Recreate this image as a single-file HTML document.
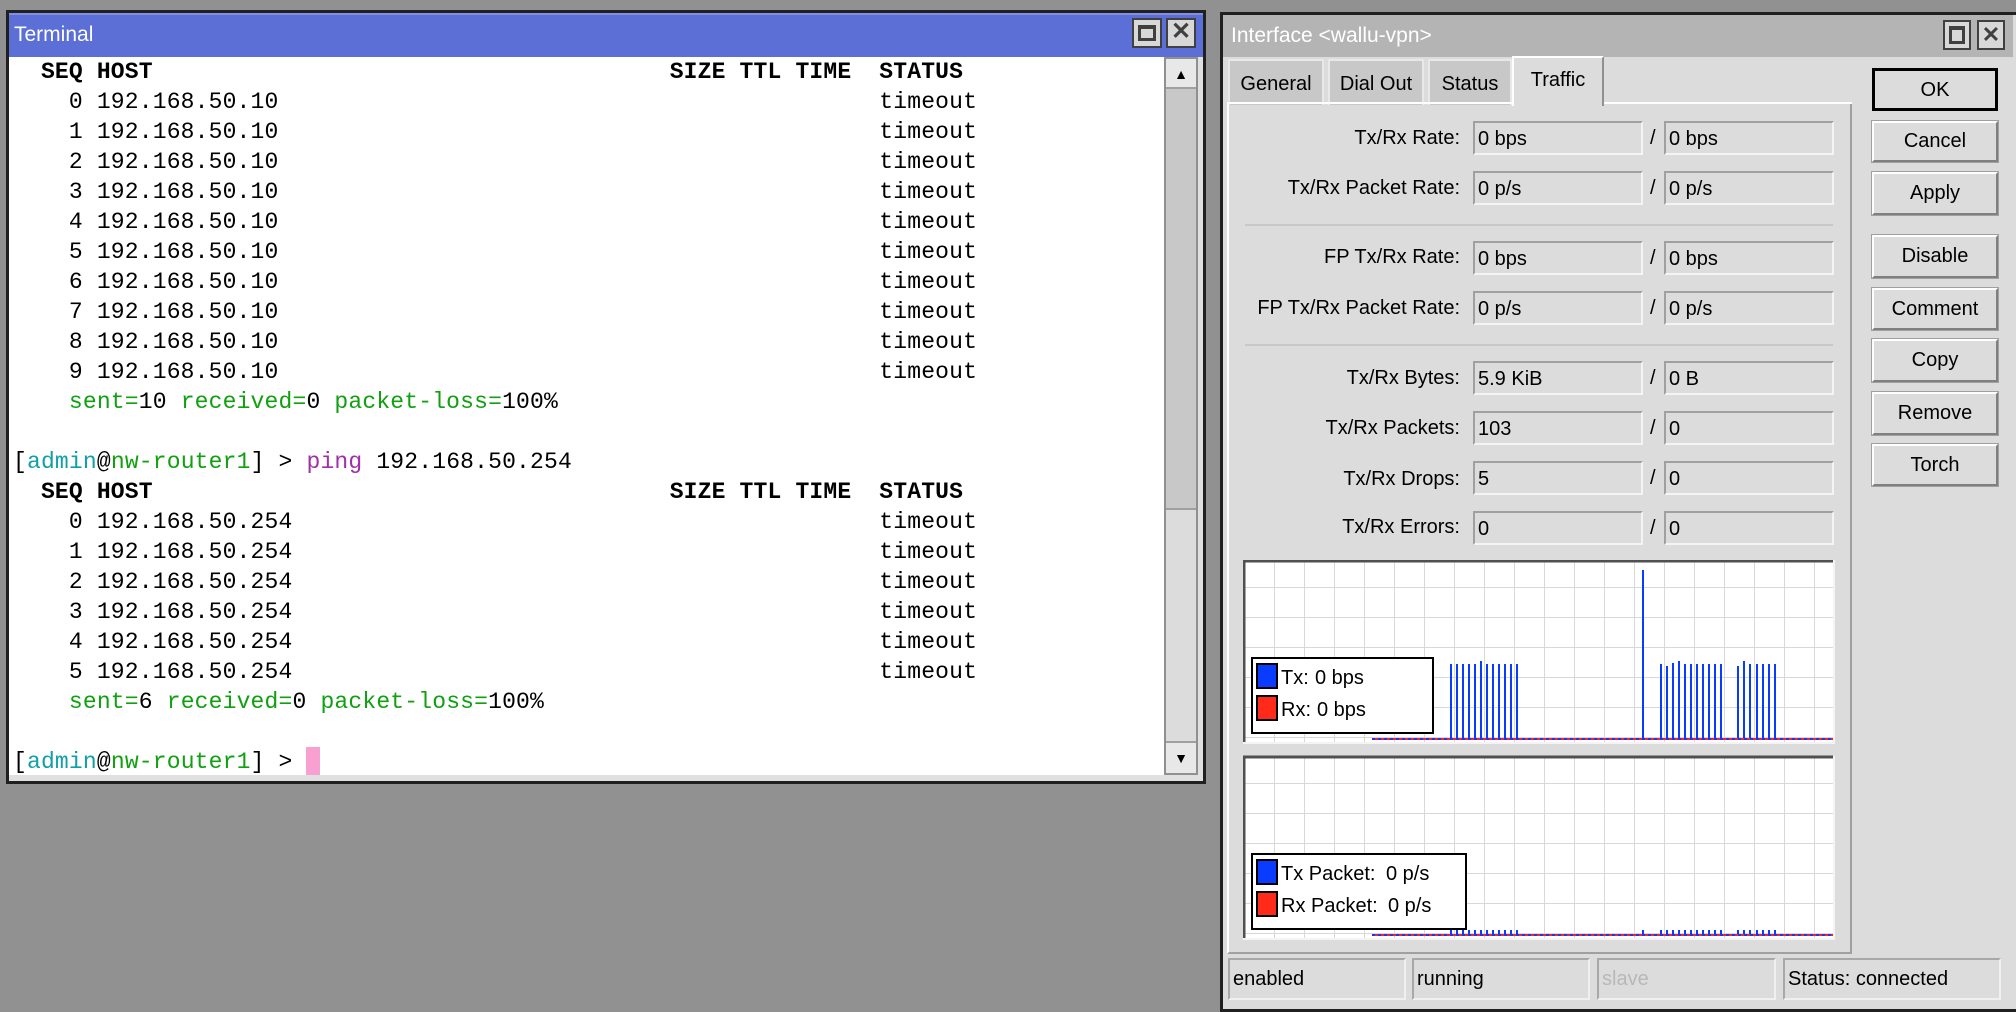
<!DOCTYPE html>
<html><head><meta charset="utf-8"><style>
body{margin:0;width:2016px;height:1006px;background:#919191;position:relative;overflow:hidden;font-family:"Liberation Sans",sans-serif}
.a{position:absolute;box-sizing:border-box}
pre{margin:0;font-family:"Liberation Mono",monospace;font-size:23px;letter-spacing:0.17px;line-height:30px;color:#000}
.b{font-weight:bold}.t{color:#10a0a8}.g{color:#10a010}.m{color:#a030a8}
.lbl{position:absolute;right:0;font-size:20px;color:#000;text-align:right}
.fld{position:absolute;height:34px;background:#dcdcdc;border:2px solid #a0a0a0;border-right-color:#f4f4f4;border-bottom-color:#f4f4f4;font-size:20px;line-height:32px;padding-left:3px;box-sizing:border-box}
.sl{position:absolute;left:1650px;font-size:20px}
.btn{position:absolute;left:1872px;width:126px;background:#dcdcdc;border:2px solid #fff;border-right-color:#808080;border-bottom-color:#808080;font-size:20px;text-align:center;box-sizing:border-box;outline:1px solid #a0a0a0}
.tab{position:absolute;top:59px;height:46px;background:#c8c8c8;border:2px solid #e8e8e8;border-bottom:none;font-size:20px;text-align:center;line-height:46px;box-sizing:border-box}
.sb{position:absolute;top:958px;height:42px;border:2px solid #a8a8a8;border-right-color:#f0f0f0;border-bottom-color:#f0f0f0;font-size:20px;line-height:38px;padding-left:3px;box-sizing:border-box}
</style></head><body>
<div class="a" style="left:6px;top:10px;width:1200px;height:774px;background:#e0e0e0;border:3px solid #202020"></div>
<div class="a" style="left:9px;top:13px;width:1194px;height:44px;background:#5b6fd6;border-top:2px solid #8090e0"></div>
<div class="a" style="left:14px;top:20px;color:#fff;font-size:21px;line-height:30px">Terminal</div>
<div class="a" style="left:1132px;top:18px;width:30px;height:30px;background:#d8d8d8;border:2px solid #404040"><div class="a" style="left:4px;top:5px;width:18px;height:16px;border:3px solid #404040;border-top-width:4px"></div></div>
<div class="a" style="left:1166px;top:18px;width:30px;height:30px;background:#d8d8d8;border:2px solid #404040;font-size:24px;line-height:24px;text-align:center;color:#404040;font-weight:bold">✕</div>
<div class="a" style="left:9px;top:57px;width:1155px;height:718px;background:#fff"></div>
<div class="a" style="left:1164px;top:57px;width:34px;height:718px;background:#dcdcdc;border:2px solid #909090"></div>
<div class="a" style="left:1166px;top:59px;width:30px;height:30px;background:#e8e8e8;border-bottom:2px solid #a0a0a0;text-align:center;font-size:14px;line-height:30px">▲</div>
<div class="a" style="left:1166px;top:89px;width:30px;height:421px;background:#c8c8c8;border-bottom:2px solid #a0a0a0"></div>
<div class="a" style="left:1166px;top:741px;width:30px;height:32px;background:#e8e8e8;border-top:2px solid #a0a0a0;text-align:center;font-size:14px;line-height:30px">▼</div>
<div class="a" style="left:306px;top:747px;width:14px;height:28px;background:#f8a0d0"></div>
<pre class="a" style="left:13px;top:57px"><span class="b">  SEQ HOST                                     SIZE TTL TIME  STATUS</span>
    0 192.168.50.10                                           timeout
    1 192.168.50.10                                           timeout
    2 192.168.50.10                                           timeout
    3 192.168.50.10                                           timeout
    4 192.168.50.10                                           timeout
    5 192.168.50.10                                           timeout
    6 192.168.50.10                                           timeout
    7 192.168.50.10                                           timeout
    8 192.168.50.10                                           timeout
    9 192.168.50.10                                           timeout
    <span class="g">sent=</span>10 <span class="g">received=</span>0 <span class="g">packet-loss=</span>100%

[<span class="t">admin</span>@<span class="g">nw-router1</span>] &gt; <span class="m">ping</span> 192.168.50.254
<span class="b">  SEQ HOST                                     SIZE TTL TIME  STATUS</span>
    0 192.168.50.254                                          timeout
    1 192.168.50.254                                          timeout
    2 192.168.50.254                                          timeout
    3 192.168.50.254                                          timeout
    4 192.168.50.254                                          timeout
    5 192.168.50.254                                          timeout
    <span class="g">sent=</span>6 <span class="g">received=</span>0 <span class="g">packet-loss=</span>100%

[<span class="t">admin</span>@<span class="g">nw-router1</span>] &gt; </pre>

<div class="a" style="left:1220px;top:12px;width:800px;height:1000px;background:#dcdcdc;border:3px solid #202020"></div>
<div class="a" style="left:1223px;top:15px;width:790px;height:42px;background:#b4b4b4"></div>
<div class="a" style="left:1231px;top:22px;color:#fff;font-size:21px;line-height:28px">Interface &lt;wallu-vpn&gt;</div>
<div class="a" style="left:1943px;top:20px;width:28px;height:30px;background:#d8d8d8;border:2px solid #404040"><div class="a" style="left:4px;top:4px;width:16px;height:18px;border:3px solid #404040;border-top-width:4px"></div></div>
<div class="a" style="left:1977px;top:20px;width:28px;height:30px;background:#d8d8d8;border:2px solid #404040;font-size:22px;line-height:26px;text-align:center;color:#404040;font-weight:bold">✕</div>
<div class="tab" style="left:1228px;width:96px">General</div>
<div class="tab" style="left:1328px;width:96px">Dial Out</div>
<div class="tab" style="left:1428px;width:84px">Status</div>
<div class="tab" style="left:1512px;top:56px;height:50px;width:92px;background:#dcdcdc;border-color:#fff;border-right-color:#909090;line-height:44px">Traffic</div>
<div class="a" style="left:1227px;top:104px;width:625px;height:850px;border:2px solid #fff;border-right-color:#a0a0a0;border-bottom-color:#a0a0a0;border-top:none"></div>
<div class="a" style="left:1604px;top:102px;width:248px;height:2px;background:#fff"></div>
<div class="a" style="left:1227px;top:102px;width:286px;height:2px;background:#fff"></div>

<div class="a" style="left:1230px;top:0;width:230px;height:600px">
<div class="lbl" style="top:127px">Tx/Rx Rate:</div>
<div class="lbl" style="top:177px">Tx/Rx Packet Rate:</div>
<div class="lbl" style="top:246px">FP Tx/Rx Rate:</div>
<div class="lbl" style="top:297px">FP Tx/Rx Packet Rate:</div>
<div class="lbl" style="top:367px">Tx/Rx Bytes:</div>
<div class="lbl" style="top:417px">Tx/Rx Packets:</div>
<div class="lbl" style="top:468px">Tx/Rx Drops:</div>
<div class="lbl" style="top:516px">Tx/Rx Errors:</div>
</div>
<div class="a" style="left:1245px;top:224px;width:588px;height:2px;background:#c8c8c8"></div>
<div class="a" style="left:1245px;top:344px;width:588px;height:2px;background:#c8c8c8"></div>

<div class="fld" style="left:1473px;top:121px;width:170px">0 bps</div><div class="sl" style="top:127px">/</div><div class="fld" style="left:1664px;top:121px;width:170px">0 bps</div>
<div class="fld" style="left:1473px;top:171px;width:170px">0 p/s</div><div class="sl" style="top:177px">/</div><div class="fld" style="left:1664px;top:171px;width:170px">0 p/s</div>
<div class="fld" style="left:1473px;top:241px;width:170px">0 bps</div><div class="sl" style="top:247px">/</div><div class="fld" style="left:1664px;top:241px;width:170px">0 bps</div>
<div class="fld" style="left:1473px;top:291px;width:170px">0 p/s</div><div class="sl" style="top:297px">/</div><div class="fld" style="left:1664px;top:291px;width:170px">0 p/s</div>
<div class="fld" style="left:1473px;top:361px;width:170px">5.9 KiB</div><div class="sl" style="top:367px">/</div><div class="fld" style="left:1664px;top:361px;width:170px">0 B</div>
<div class="fld" style="left:1473px;top:411px;width:170px">103</div><div class="sl" style="top:417px">/</div><div class="fld" style="left:1664px;top:411px;width:170px">0</div>
<div class="fld" style="left:1473px;top:461px;width:170px">5</div><div class="sl" style="top:467px">/</div><div class="fld" style="left:1664px;top:461px;width:170px">0</div>
<div class="fld" style="left:1473px;top:511px;width:170px">0</div><div class="sl" style="top:517px">/</div><div class="fld" style="left:1664px;top:511px;width:170px">0</div>

<svg class="a" style="left:1243px;top:560px" width="592" height="385" viewBox="0 0 592 385">
<defs><pattern id="gr" width="30" height="30" patternUnits="userSpaceOnUse" x="1" y="-3"><path d="M0 0V30M0 0H30" stroke="#d8d8d8" stroke-width="2" fill="none"/></pattern></defs>
<rect x="0" y="0" width="591" height="183" fill="#fff"/><rect x="0" y="0" width="591" height="183" fill="url(#gr)"/>
<path d="M1 182V1H590" stroke="#505050" stroke-width="3" fill="none"/><path d="M0 183H591V0" stroke="#f4f4f4" stroke-width="2" fill="none"/>
<g stroke="#0a3cff" stroke-width="2">
<path d="M208 179V104M214 179V104M220 179V104M226 179V104M232 179V104M238 179V101M244 179V104M250 179V104M256 179V104M262 179V104M268 179V104M274 179V104"/>
<path d="M400 179V10"/>
<path d="M418 179V104M424 179V106M430 179V103M436 179V101M442 179V104M448 179V104M454 179V104M460 179V104M466 179V104M472 179V104M478 179V104"/>
<path d="M495 179V106M501 179V101M507 179V104M514 179V104M520 179V104M526 179V104M532 179V104"/>
</g>
<path d="M129 179H590" stroke="#0a3cff" stroke-width="2" stroke-dasharray="3 3"/><path d="M132 179H590" stroke="#ff2020" stroke-width="2" stroke-dasharray="3 3"/>
<rect x="9" y="98" width="181" height="75" fill="#fff" stroke="#000" stroke-width="2"/>
<rect x="14" y="104" width="20" height="24" fill="#0a3cff" stroke="#000" stroke-width="2"/>
<rect x="14" y="136" width="20" height="24" fill="#ff2a1a" stroke="#000" stroke-width="2"/>
<text x="38" y="124" font-family="Liberation Sans" font-size="20">Tx:</text><text x="72" y="124" font-family="Liberation Sans" font-size="20">0 bps</text>
<text x="38" y="156" font-family="Liberation Sans" font-size="20">Rx:</text><text x="74" y="156" font-family="Liberation Sans" font-size="20">0 bps</text>
<g transform="translate(0,196)">
<rect x="0" y="0" width="591" height="183" fill="#fff"/><rect x="0" y="0" width="591" height="183" fill="url(#gr)"/>
<path d="M1 182V1H590" stroke="#505050" stroke-width="3" fill="none"/><path d="M0 183H591V0" stroke="#f4f4f4" stroke-width="2" fill="none"/>
<path d="M208 179V174M214 179V174M220 179V174M226 179V174M232 179V174M238 179V174M244 179V174M250 179V174M256 179V174M262 179V174M268 179V174M274 179V174M400 179V174M418 179V174M424 179V174M430 179V174M436 179V174M442 179V174M448 179V174M454 179V174M460 179V174M466 179V174M472 179V174M478 179V174M495 179V174M501 179V174M507 179V174M514 179V174M520 179V174M526 179V174M532 179V174" stroke="#0a3cff" stroke-width="2"/>
<path d="M129 179H590" stroke="#0a3cff" stroke-width="2" stroke-dasharray="3 3"/><path d="M132 179H590" stroke="#ff2020" stroke-width="2" stroke-dasharray="3 3"/>
<rect x="9" y="98" width="214" height="75" fill="#fff" stroke="#000" stroke-width="2"/>
<rect x="14" y="104" width="20" height="24" fill="#0a3cff" stroke="#000" stroke-width="2"/>
<rect x="14" y="136" width="20" height="24" fill="#ff2a1a" stroke="#000" stroke-width="2"/>
<text x="38" y="124" font-family="Liberation Sans" font-size="20">Tx Packet:</text><text x="143" y="124" font-family="Liberation Sans" font-size="20">0 p/s</text>
<text x="38" y="156" font-family="Liberation Sans" font-size="20">Rx Packet:</text><text x="145" y="156" font-family="Liberation Sans" font-size="20">0 p/s</text>
</g>
</svg>

<div class="btn" style="top:68px;height:43px;line-height:39px;border:3px solid #000;outline:none">OK</div>
<div class="btn" style="top:121px;height:41px;line-height:37px">Cancel</div>
<div class="btn" style="top:172px;height:43px;line-height:39px">Apply</div>
<div class="btn" style="top:235px;height:43px;line-height:39px">Disable</div>
<div class="btn" style="top:288px;height:42px;line-height:38px">Comment</div>
<div class="btn" style="top:339px;height:43px;line-height:39px">Copy</div>
<div class="btn" style="top:392px;height:43px;line-height:39px">Remove</div>
<div class="btn" style="top:444px;height:42px;line-height:38px">Torch</div>

<div class="sb" style="left:1228px;width:178px">enabled</div>
<div class="sb" style="left:1412px;width:178px">running</div>
<div class="sb" style="left:1597px;width:179px;color:#b8b8b8">slave</div>
<div class="sb" style="left:1783px;width:218px">Status: connected</div>
</body></html>
